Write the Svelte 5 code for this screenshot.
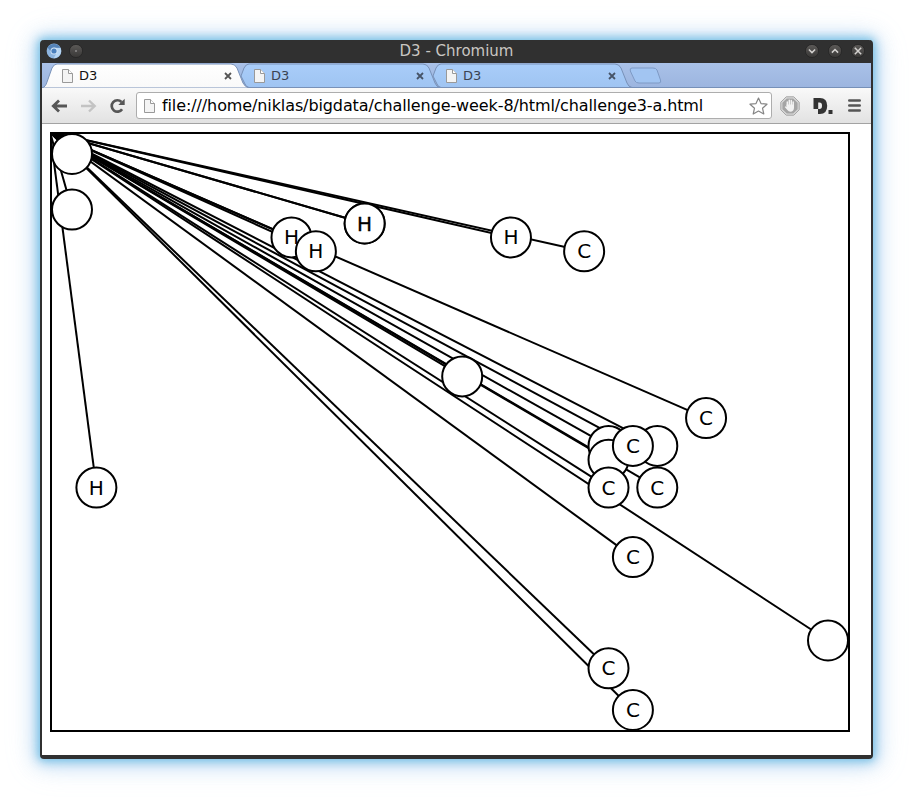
<script>
  const tabs = [{ active: true }, { active: false }, { active: false }];

  const grid = [
    [0, 0, ''], [0, 4, ''], [1, 24, 'H'], [9, 6, 'H'], [10, 7, 'H'],
    [12, 5, ''], [12, 5, 'H'], [18, 6, 'H'], [21, 7, 'C'], [16, 16, ''],
    [26, 19, 'C'], [22, 21, ''], [22, 22, ''], [24, 21, ''], [23, 21, 'C'],
    [22, 24, 'C'], [24, 24, 'C'], [23, 29, 'C'], [31, 35, ''],
    [22, 37, 'C'], [23, 40, 'C']
  ];
  const nodes = grid.map(([gx, gy, label]) => ({
    x: 22 + (gx * 756) / 31,
    y: 22 + gy * 13.9,
    label,
    strong: gx === 12
  }));
</script>

{#snippet page()}
  <svg class="page" width="11" height="14" viewBox="0 0 11 14">
    <path d="M.5 .5H6.5L10.5 4.5V13.5H.5Z" fill="#f4f4f4" stroke="#999" />
    <path d="M6.5 .5V4.5H10.5" fill="#fff" stroke="#999" />
  </svg>
{/snippet}

<div class="desktop">
  <div class="window">
    <header class="titlebar">
      <svg width="16" height="16" viewBox="0 0 15 16">
        <circle cx="7.5" cy="8" r="7.4" fill="#8db5e0" />
        <path d="M1.1 4.6A7.3 7.3 0 0 1 13.9 4.8H7.5A3.4 3.4 0 0 0 4.3 8.6Z" fill="#5583b8" />
        <path d="M14 5H9.2L10.4 9.5L7.2 15.2A7.3 7.3 0 0 0 14 5Z" fill="#b7d6f4" />
        <circle cx="7.5" cy="8" r="3.5" fill="#d8e8f8" />
        <circle cx="7.5" cy="8" r="2.6" fill="#4a80be" />
      </svg>
      <svg class="pin" width="14" height="14" viewBox="0 0 14 14">
        <circle cx="7" cy="7" r="6.6" fill="url(#knob)" stroke="#242424" stroke-width=".8" />
        <circle cx="7" cy="7" r=".8" fill="#bbb" />
      </svg>
      <span class="title">D3 - Chromium</span>
      <div class="controls">
        {#each ['M3.9 5.5L7 8.6L10.1 5.5', 'M3.9 8.6L7 5.5L10.1 8.6', 'M3.8 3.8L10.2 10.2M10.2 3.8L3.8 10.2'] as d}
          <svg width="14" height="14" viewBox="0 0 14 14">
            <defs>
              <linearGradient id="knob" x1="0" y1="0" x2="0" y2="1">
                <stop offset="0" stop-color="#5c5a58" />
                <stop offset="1" stop-color="#383736" />
              </linearGradient>
            </defs>
            <circle cx="7" cy="7" r="6.6" fill="url(#knob)" stroke="#242424" stroke-width=".8" />
            <path {d} fill="none" stroke="#d4d2d0" stroke-width="1.5" />
          </svg>
        {/each}
      </div>
    </header>

    <div class="tabstrip">
      {#each tabs as tab}
        <div class="tab" class:active={tab.active}>
          <svg class="shape" width="208" height="25" viewBox="0 0 208 25">
            <defs>
              <linearGradient id="on" x1="0" y1="0" x2="0" y2="1">
                <stop offset="0" stop-color="#fff" />
                <stop offset="1" stop-color="#f9f9f9" />
              </linearGradient>
              <linearGradient id="off" x1="0" y1="0" x2="0" y2="1">
                <stop offset="0" stop-color="#a9cdf9" />
                <stop offset="1" stop-color="#9fc4f2" />
              </linearGradient>
            </defs>
            <path
              d={tab.active
                ? 'M0 25C3 24 4 22 5 19L10 5Q12 1 15 1H189Q193 1 195 5L201 20Q203 24 207 25Z'
                : 'M7 13L10 5Q12 1 15 1H189Q193 1 195 5L201 20Q202.5 24 206 24.5H15Q12 24 11 21Z'}
              fill={tab.active ? 'url(#on)' : 'url(#off)'}
              stroke="#7891b8"
            />
          </svg>
          <div class="tabbody">
            {@render page()}
            <span>D3</span>
            <svg class="close" width="8" height="8" viewBox="0 0 8 8">
              <path d="M1 1L7 7M7 1L1 7" stroke={tab.active ? '#555' : '#465468'} stroke-width="1.8" />
            </svg>
          </div>
        </div>
      {/each}
      <svg class="newtab" width="34" height="17" viewBox="0 0 34 17">
        <path d="M3 1H24Q27 1 28 3L31.5 13Q32.5 16 30 16H10Q7 16 6 14L1.3 4Q.5 1 3 1Z" fill="#a2c5f2" stroke="#7e9ac5" />
      </svg>
    </div>

    <div class="toolbar">
      <svg width="17" height="14" viewBox="0 0 17 14">
        <path d="M2 7H16M8 1.5L2.3 7L8 12.5" fill="none" stroke="#565656" stroke-width="2.8" />
      </svg>
      <svg class="forward" width="17" height="14" viewBox="0 0 17 14">
        <path d="M1 7H15M9 1.5L14.7 7L9 12.5" fill="none" stroke="#c3c3c3" stroke-width="2.4" />
      </svg>
      <svg class="reload" width="17" height="16" viewBox="0 0 17 16">
        <path d="M13.1 11.2A5.7 5.7 0 1 1 12.5 4" fill="none" stroke="#565656" stroke-width="2.7" />
        <path d="M15.7 .8V7H9.3Z" fill="#565656" />
      </svg>
      <div class="omnibox">
        {@render page()}
        <span class="url">file:///home/niklas/bigdata/challenge-week-8/html/challenge3-a.html</span>
        <svg class="star" width="19" height="18" viewBox="0 0 19 18">
          <path d="M9.5 1L12 6.6L18 7.2L13.5 11.2L14.8 17L9.5 14L4.2 17L5.5 11.2L1 7.2L7 6.6Z" fill="#fff" stroke="#858585" stroke-width="1.2" stroke-linejoin="round" />
        </svg>
      </div>
      <svg class="block" width="20" height="20" viewBox="0 0 20 20">
        <path d="M6.2 .8H13.8L19.2 6.2V13.8L13.8 19.2H6.2L.8 13.8V6.2Z" fill="#d8d8d8" stroke="#a6a6a6" />
        <path d="M6.8 2.4H13.2L17.6 6.8V13.2L13.2 17.6H6.8L2.4 13.2V6.8Z" fill="#a5a5a5" />
        <path d="M7.3 10V6M9.3 9V4.3M11.3 9V4.5M13.2 10V6" stroke="#f2f2f2" stroke-width="1.5" stroke-linecap="round" />
        <path d="M6.6 8.5H14V12Q13.5 15.8 10.5 15.8Q8.5 15.8 7.4 14L4.7 11L5.7 10.3L6.6 11Z" fill="#f2f2f2" />
      </svg>
      <svg class="dlogo" width="20" height="16" viewBox="0 0 20 16">
        <path fill-rule="evenodd" d="M.5 0H7Q14.2 0 14.2 7.8Q14.2 16 7 16H5V11H.5ZM5.2 4.5V11H6.5Q9 11 9 7.8Q9 4.5 6.5 4.5Z" fill="#333" />
        <rect x="15.5" y="12" width="4" height="4" fill="#333" />
      </svg>
      <svg class="menu" width="13" height="13" viewBox="0 0 13 13">
        <path d="M1.3 1.5H11.7M1.3 6.5H11.7M1.3 11.5H11.7" stroke="#555" stroke-width="2.6" stroke-linecap="round" />
      </svg>
    </div>

    <main>
      <svg class="graph" width="800" height="600" viewBox="0 0 800 600">
        {#each nodes as n}
          <line x1="0" y1="0" x2={n.x} y2={n.y} />
        {/each}
        {#each nodes as n}
          <circle cx={n.x} cy={n.y} r="20" />
          {#if n.label}
            <text class:strong={n.strong} x={n.x} y={n.y + 7}>{n.label}</text>
          {/if}
        {/each}
        <rect x="1" y="1" width="798" height="598" />
      </svg>
    </main>
  </div>
</div>

<style>
  :global(body) { margin: 0; background: #fff; }
  .desktop {
    box-sizing: border-box;
    width: 913px;
    height: 799px;
    padding: 40px;
    overflow: hidden;
    font-family: "DejaVu Sans", sans-serif;
  }
  .window {
    box-sizing: border-box;
    width: 833px;
    height: 719px;
    display: flex;
    flex-direction: column;
    border: 2px solid #303030;
    border-top: 0;
    border-bottom-width: 4px;
    border-radius: 4px;
    background: #fff;
    box-shadow: 0 0 8px 2px rgba(85, 180, 222, .7), 0 1px 18px 5px rgba(110, 178, 230, .45), 0 2px 32px 4px rgba(160, 195, 235, .22);
  }
  svg { display: block; flex: none; }
  .titlebar {
    height: 23px;
    flex: none;
    display: grid;
    grid-template-columns: 23px 57px 1fr 80px;
    align-items: center;
    padding: 0 5px 2px 5px;
    box-sizing: border-box;
    background: #303030;
    border-radius: 3px 3px 0 0;
    margin: 0 -1px;
    color: #c9c6c2;
    font-size: 15px;
  }
  .title { text-align: center; line-height: 20px; white-space: nowrap; }
  .controls { display: flex; gap: 9px; justify-content: flex-end; padding-right: 2px; }
  .tabstrip {
    height: 25px;
    flex: none;
    display: flex;
    background: linear-gradient(#a9c1e8, #9cb5df);
    box-shadow: inset 0 -1px #7690b8;
    overflow: hidden;
  }
  .tab { display: grid; grid-template-columns: 192px; width: 192px; flex: none; color: #3b4352; }
  .tab.active { color: #111; z-index: 1; }
  .tab > * { grid-area: 1 / 1; }
  .tabbody {
    box-sizing: border-box;
    width: 192px;
    display: flex;
    align-items: center;
    height: 26px;
    padding: 0 2px 0 20px;
    font-size: 13px;
    z-index: 1;
  }
  .tabbody span { margin-left: 6px; line-height: 24px; padding-bottom: 1px; }
  .close { margin-left: auto; }
  .newtab { margin: 4px 0 0 11px; }
  .toolbar {
    height: 36px;
    flex: none;
    box-sizing: border-box;
    display: flex;
    align-items: center;
    padding: 0 10px 0 9px;
    background: linear-gradient(#f9f9f9, #e2e2e2);
    border-bottom: 1px solid #a3a3a3;
  }
  .forward { margin-left: 12px; }
  .reload { margin-left: 12px; }
  .omnibox {
    box-sizing: border-box;
    width: 636px;
    height: 27px;
    flex: none;
    display: flex;
    align-items: center;
    margin-left: 10px;
    padding: 0 3px 0 7px;
    border: 1px solid #adadad;
    border-radius: 3px;
    background: #fff;
  }
  .url { margin-left: 7px; font-size: 16px; letter-spacing: -.105px; line-height: 25px; white-space: nowrap; color: #000; }
  .star { margin-left: auto; }
  .block { margin-left: 8px; }
  .dlogo { margin-left: 13px; }
  .menu { margin-left: auto; }
  main { flex: 1; padding: 8px; }
  .graph line { stroke: #000; stroke-width: 2; }
  .graph circle { fill: #fff; stroke: #000; stroke-width: 2; }
  .graph rect { fill: none; stroke: #000; stroke-width: 2; }
  .graph text { font-size: 20px; text-anchor: middle; fill: #000; }
  .graph text.strong { stroke: #000; stroke-width: .35; }
</style>
